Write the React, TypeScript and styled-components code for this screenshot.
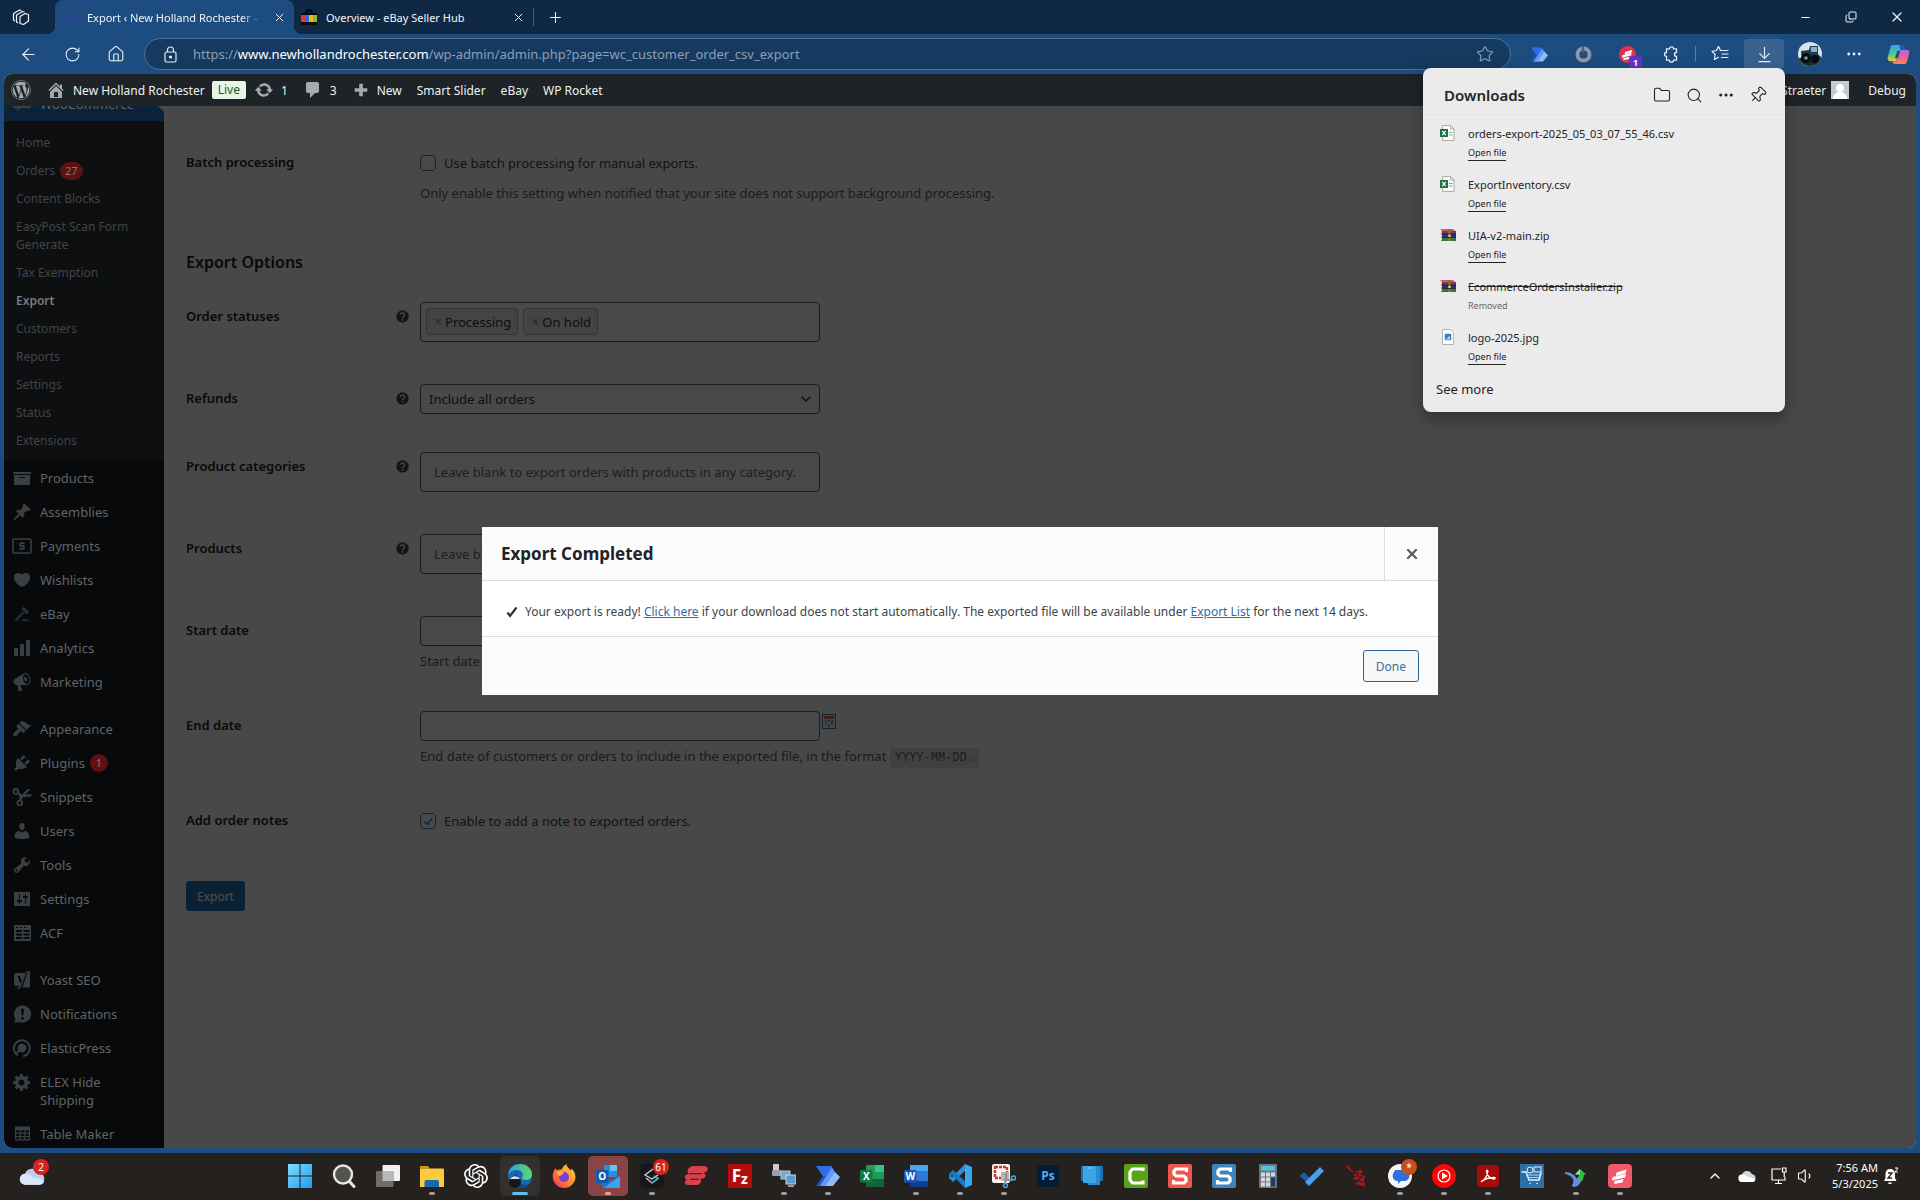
import React from "react";
import styled, { createGlobalStyle, css } from "styled-components";
import { FaWordpress } from "react-icons/fa";
import { SiOpenai } from "react-icons/si";
import {
  Copy, Folder, Minus, Search, Pin, Star, X, Plus, House, RotateCw, ArrowLeft, ArrowDownToLine,
  Ellipsis, ChevronUp, ChevronDown, Volume1,
} from "lucide-react";

const sans = `"Noto Sans", "Open Sans", "Liberation Sans", sans-serif`;
const mono = `"Liberation Mono", "DejaVu Sans Mono", monospace`;

const Global = createGlobalStyle`
  *, *::before, *::after { box-sizing: border-box; }
  body { margin: 0; background: #1c4c80; font-family: ${sans}; font-size: 13px; }
  button, input, select { font-family: inherit; margin: 0; }
  h1, h2, h3, p, ul { margin: 0; padding: 0; }
  svg { display: block; flex: none; }
`;

const plainButton = css`
  border: 0;
  padding: 0;
  background: none;
  color: inherit;
  cursor: pointer;
  display: flex;
  align-items: center;
  justify-content: center;
`;

/* ---------- Browser window ---------- */

const Desktop = styled.div`
  display: flex;
  flex-direction: column;
  height: 100vh;
  overflow: hidden;
`;

const Browser = styled.div`
  position: relative;
  flex: 1;
  min-height: 0;
  display: flex;
  flex-direction: column;
  background: #1c4c80;
`;

const TitleBar = styled.header`
  display: flex;
  height: 34px;
  background: #0f2944;
  color: #f1f5f9;
`;

const Workspaces = styled.button`
  ${plainButton}
  width: 42px;
  margin-right: 13px;
`;

const Tab = styled.div<{ $active?: boolean }>`
  position: relative;
  display: flex;
  align-items: center;
  gap: 9px;
  width: 239px;
  padding: 0 7px;
  font-size: 11px;
  background: ${(p) => (p.$active ? "#1c4c80" : "transparent")};
  border-radius: ${(p) => (p.$active ? "8px 8px 0 0" : "0")};
  &::before, &::after {
    content: "";
    display: ${(p) => (p.$active ? "block" : "none")};
    position: absolute;
    bottom: 0;
    width: 8px;
    height: 8px;
  }
  &::before { left: -8px; background: radial-gradient(circle at 0 0, transparent 8px, #1c4c80 8px); }
  &::after { right: -8px; background: radial-gradient(circle at 100% 0, transparent 8px, #1c4c80 8px); }
`;

const TabTitle = styled.span<{ $fade?: boolean }>`
  flex: 1;
  min-width: 0;
  white-space: nowrap;
  mask-image: ${(p) => (p.$fade ? "linear-gradient(90deg, #000 88%, transparent)" : "none")};
`;

const TabClose = styled.button`
  ${plainButton}
  width: 16px;
  height: 16px;
`;

const NewTab = styled.button`
  ${plainButton}
  width: 44px;
  margin: 8px auto 8px 0;
  border-left: 1px solid #4a5f76;
`;

const WindowButton = styled.button`
  ${plainButton}
  width: 46px;
`;

const Toolbar = styled.div`
  display: flex;
  align-items: center;
  height: 40px;
  padding: 0 0 0 6px;
  color: #e8eff6;
`;

const ToolButton = styled.button<{ $on?: boolean }>`
  ${plainButton}
  position: relative;
  width: ${(p) => (p.$on ? "40px" : "44px")};
  height: 30px;
  margin-left: ${(p) => (p.$on ? "2px" : "0")};
  margin-right: ${(p) => (p.$on ? "4px" : "0")};
  border-radius: 4px;
  background: ${(p) => (p.$on ? "#3a6290" : "none")};
`;

const ToolDivider = styled.span`
  width: 1px;
  height: 16px;
  margin: 0 2px;
  background: #5b7fa6;
`;

const CountBadge = styled.span`
  position: absolute;
  right: 7px;
  bottom: 0;
  width: 13px;
  height: 13px;
  border-radius: 3px;
  background: #6334c4;
  color: #fff;
  font-size: 9px;
  font-weight: 700;
  line-height: 13px;
  text-align: center;
`;

const AddressBar = styled.div`
  display: flex;
  align-items: center;
  gap: 14px;
  flex: 1;
  height: 32px;
  margin: 0 6px;
  padding: 0 16px 0 17px;
  border: 1px solid #4d7196;
  border-radius: 16px;
  background: #16395f;
  color: #dfe8f1;
`;

const Url = styled.span`
  flex: 1;
  white-space: nowrap;
  color: #8c9fb4;
  font-size: 13px;
  b { color: #fff; font-weight: 400; }
`;

const Avatar = styled.span`
  width: 24px;
  height: 24px;
  border-radius: 50%;
  overflow: hidden;
`;

/* ---------- Page ---------- */

const Page = styled.div`
  position: relative;
  flex: 1;
  min-height: 0;
  margin: 0 4px 5px;
  display: flex;
  flex-direction: column;
  overflow: hidden;
  border-radius: 8px;
  background: #f0f0f1;
`;

const AdminBar = styled.nav`
  position: relative;
  z-index: 4;
  display: flex;
  align-items: center;
  flex: none;
  height: 32px;
  padding: 0 10px 0 7px;
  background: #1d2327;
  color: #f0f0f1;
  font-size: 12px;
`;

const BarLink = styled.a<{ $gap?: number }>`
  display: flex;
  align-items: center;
  gap: 7px;
  margin-right: ${(p) => p.$gap ?? 15}px;
  color: inherit;
  text-decoration: none;
  white-space: nowrap;
  svg { color: #a7aaad; }
`;

const Live = styled.span`
  padding: 0 6px;
  margin-right: 8px;
  border-radius: 2px;
  background: #e6f5e6;
  color: #1c5c24;
  line-height: 18px;
`;

const BarUser = styled(BarLink)`
  gap: 5px;
  margin-left: auto;
`;

const Body = styled.div`
  flex: 1;
  min-height: 0;
  display: flex;
  overflow: hidden;
`;

const Sidebar = styled.nav`
  position: relative;
  z-index: 3;
  flex: none;
  width: 160px;
  overflow: hidden;
  background: #07090b;
`;

const Menu = styled.ul`
  list-style: none;
  margin-top: -19px;
`;

const MenuLink = styled.a<{ $current?: boolean }>`
  position: relative;
  display: flex;
  align-items: flex-start;
  gap: 8px;
  padding: 8px;
  background: ${(p) => (p.$current ? "#0b2338" : "transparent")};
  color: #626465;
  font-size: 13px;
  line-height: 18px;
  text-decoration: none;
  svg { margin: -1px 0; color: #3b3f42; }
  &::after {
    content: "";
    display: ${(p) => (p.$current ? "block" : "none")};
    position: absolute;
    right: 0;
    top: 9px;
    border: 8px solid transparent;
    border-right-color: #484848;
  }
`;

const Separator = styled.li`
  height: 13px;
`;

const SubMenu = styled.ul`
  list-style: none;
  padding: 8px 0 6px;
  background: #0d0f11;
`;

const SubLink = styled.a<{ $current?: boolean }>`
  display: block;
  padding: 5px 12px;
  color: ${(p) => (p.$current ? "#7c7d7e" : "#414547")};
  font-size: 12px;
  font-weight: ${(p) => (p.$current ? 600 : 400)};
  line-height: 18px;
  text-decoration: none;
`;

const MenuCount = styled.span`
  display: inline-block;
  min-width: 18px;
  height: 18px;
  margin-left: 5px;
  padding: 0 5px;
  border-radius: 9px;
  background: #5e1113;
  color: #8c7474;
  font-size: 11px;
  line-height: 18px;
  text-align: center;
  vertical-align: top;
`;

const Main = styled.main`
  flex: 1;
  min-width: 0;
  padding: 42px 22px 0;
  overflow: hidden;
  color: #3c434a;
`;

const Section = styled.h2`
  margin: 7px 0 28px;
  color: #1d2327;
  font-size: 16px;
  font-weight: 600;
  line-height: 24px;
`;

const Row = styled.div`
  display: grid;
  grid-template-columns: 210px 24px minmax(0, 1fr);
  align-items: start;
  padding-bottom: 38px;
`;

const RowLabel = styled.label`
  padding-top: 5px;
  color: #1d2327;
  font-size: 13px;
  font-weight: 600;
  line-height: 18px;
`;

const Help = styled.span`
  display: flex;
  padding-top: 8px;
  color: #3c434a;
`;

const fieldBox = css`
  width: 400px;
  max-width: 100%;
  border: 1px solid #5c6066;
  border-radius: 4px;
  background: #f6f6f7;
  color: #2c3338;
  font-size: 13px;
`;

const TextField = styled.input`
  ${fieldBox}
  height: 30px;
  padding: 0 8px;
`;

const PickerField = styled.input`
  ${fieldBox}
  display: block;
  height: 40px;
  margin-bottom: 4px;
  padding: 0 13px;
  &::placeholder { color: #646970; opacity: 1; }
`;

const TagField = styled.div`
  ${fieldBox}
  display: flex;
  gap: 5px;
  height: 40px;
  margin-bottom: 4px;
  padding: 5px;
`;

const Tag = styled.span`
  display: flex;
  align-items: center;
  gap: 3px;
  height: 27px;
  padding: 0 6px 0 7px;
  border: 1px solid #aaa;
  border-radius: 4px;
  background: #e4e4e4;
`;

const TagRemove = styled.button`
  ${plainButton}
  color: #888;
  font-size: 14px;
`;

const SelectWrap = styled.div`
  position: relative;
  width: 400px;
  max-width: 100%;
  svg { position: absolute; right: 6px; top: 7px; color: #3c434a; pointer-events: none; }
`;

const Select = styled.select`
  ${fieldBox}
  display: block;
  height: 30px;
  padding: 0 24px 0 8px;
  appearance: none;
`;

const CheckLine = styled.label`
  display: flex;
  align-items: center;
  gap: 8px;
  height: 30px;
  font-size: 13px;
`;

const Check = styled.input`
  appearance: none;
  display: grid;
  place-items: center;
  width: 16px;
  height: 16px;
  border: 1px solid #6c7076;
  border-radius: 4px;
  background: #f6f6f7;
  &:checked::before {
    content: "";
    width: 5px;
    height: 9px;
    margin-top: -2px;
    border: solid #3c9cf0;
    border-width: 0 2px 2px 0;
    transform: rotate(40deg);
  }
`;

const DateLine = styled.div`
  display: flex;
  gap: 2px;
  padding-right: 8px;
  svg { margin-top: 3px; }
`;

const Description = styled.p`
  margin-top: 4px;
  color: #5c6066;
  font-size: 13px;
  line-height: 23px;
  white-space: nowrap;
  code {
    padding: 3px 5px;
    background: #d8d8da;
    font-family: ${mono};
    font-size: 12px;
    line-height: 16px;
  }
`;

const Primary = styled.button`
  ${plainButton}
  height: 30px;
  margin-top: 7px;
  padding: 0 11px;
  border-radius: 3px;
  background: #2271b1;
  color: #fff;
  font-size: 12px;
`;

/* ---------- Modal ---------- */

const Backdrop = styled.div`
  position: absolute;
  inset: 0;
  z-index: 5;
  display: grid;
  place-items: center;
  pointer-events: none;
`;

const Dim = styled.div`
  position: absolute;
  inset: 32px 0 0 160px;
  z-index: 2;
  background: rgba(0, 0, 0, 0.7);
`;

const Modal = styled.section`
  width: 50%;
  background: #fcfcfc;
  pointer-events: auto;
`;

const ModalHeader = styled.header`
  display: flex;
  height: 54px;
  border-bottom: 1px solid #ddd;
`;

const ModalTitle = styled.h1`
  flex: 1;
  padding-left: 19px;
  color: #1d2327;
  font-size: 17px;
  font-weight: 700;
  line-height: 53px;
`;

const ModalClose = styled.button`
  ${plainButton}
  width: 54px;
  border-left: 1px solid #ddd;
  color: #5c5f62;
`;

const ModalBody = styled.div`
  display: flex;
  align-items: center;
  gap: 7px;
  min-height: 55px;
  padding: 6px 24px 0;
  background: #fff;
  color: #3c434a;
  font-size: 12px;
  line-height: 18px;
  a { color: #2e6da4; }
`;

const ModalFooter = styled.footer`
  display: flex;
  justify-content: flex-end;
  padding: 13px 19px;
  border-top: 1px solid #ddd;
`;

const Secondary = styled.button`
  ${plainButton}
  height: 32px;
  padding: 0 12px;
  border: 1px solid #2e6296;
  border-radius: 3px;
  background: #f6f7f7;
  color: #3c6d9e;
  font-size: 12px;
`;

/* ---------- Downloads flyout ---------- */

const Flyout = styled.aside`
  position: absolute;
  z-index: 10;
  top: 68px;
  right: 135px;
  width: 362px;
  padding-bottom: 13px;
  border-radius: 8px;
  background: #ebebeb;
  color: #242424;
  box-shadow: 0 6px 16px rgba(0, 0, 0, 0.35);
`;

const FlyoutHeader = styled.header`
  display: flex;
  align-items: center;
  height: 47px;
  padding: 8px 11px 0 21px;
  border-bottom: 1px solid #e2e2e2;
`;

const FlyoutTitle = styled.h3`
  flex: 1;
  font-size: 15px;
  font-weight: 600;
`;

const FlyoutButton = styled.button`
  ${plainButton}
  width: 32px;
  height: 32px;
`;

const FileList = styled.ul`
  list-style: none;
  padding-top: 9px;
`;

const FileRow = styled.li`
  display: flex;
  gap: 12px;
  height: 51px;
  padding-left: 17px;
  svg { margin-top: 1px; }
`;

const FileName = styled.div<{ $gone?: boolean }>`
  font-size: 11px;
  line-height: 20px;
  text-decoration: ${(p) => (p.$gone ? "line-through" : "none")};
`;

const OpenFile = styled.a`
  display: block;
  width: fit-content;
  border-bottom: 1px solid #242424;
  color: #242424;
  font-size: 9px;
  line-height: 14px;
  margin-top: 2px;
  text-decoration: none;
`;

const Removed = styled.div`
  margin-top: 2px;
  color: #6a6a6a;
  font-size: 9px;
  line-height: 14px;
`;

const SeeMore = styled.button`
  ${plainButton}
  height: 20px;
  margin: 0 0 0 13px;
  font-size: 13px;
`;

/* ---------- Taskbar ---------- */

const Taskbar = styled.footer`
  display: grid;
  grid-template-columns: 1fr auto 1fr;
  height: 47px;
  padding-bottom: 1px;
  background: #24211e;
  color: #fff;
`;

const TaskGroup = styled.div<{ $end?: boolean }>`
  display: flex;
  align-items: center;
  justify-content: ${(p) => (p.$end ? "flex-end" : "flex-start")};
  padding: ${(p) => (p.$end ? "0 16px 0 0" : "0 10px")};
`;

const TaskButton = styled.button<{ $tile?: string }>`
  ${plainButton}
  position: relative;
  width: 40px;
  height: 40px;
  margin: 3px 2px;
  border-radius: 5px;
  background: ${(p) => p.$tile ?? "none"};
`;

const Running = styled.span<{ $color?: string }>`
  position: absolute;
  bottom: 1px;
  left: 50%;
  width: ${(p) => (p.$color === "#5cc0ee" ? 16 : 6)}px;
  height: 3px;
  border-radius: 2px;
  background: ${(p) => p.$color ?? "#9d9b99"};
  transform: translateX(-50%);
`;

const TaskBadge = styled.span<{ $color?: string }>`
  position: absolute;
  top: 3px;
  right: 3px;
  min-width: 16px;
  height: 16px;
  border-radius: 8px;
  background: ${(p) => p.$color ?? "#d8231f"};
  font-size: 10px;
  line-height: 16px;
  text-align: center;
`;

const TrayButton = styled.button<{ $w: number }>`
  ${plainButton}
  width: ${(p) => p.$w}px;
  height: 40px;
`;

const Clock = styled.time`
  width: 61px;
  font-size: 11px;
  line-height: 16px;
  text-align: right;
  white-space: nowrap;
`;

/* ---------- Drawings ---------- */

const dash: Record<string, React.ReactNode> = {
  woo: <path d="M1 4h18v10H9l-4 3v-3H1z" />,
  home: <path d="M16 8.5l1.53 1.53-1.06 1.06L10 4.6l-6.47 6.49-1.06-1.06L10 2.5l4 4v-2h2v4zm-6-2.46l6 5.99V18H4v-5.97zM12 17v-5H8v5h4z" />,
  comment: <path d="M5 2h9c1.1 0 2 .9 2 2v7c0 1.1-.9 2-2 2h-2l-5 5v-5H5c-1.1 0-2-.9-2-2V4c0-1.1.9-2 2-2z" />,
  update: <path d="M10.2 3.28c3.53 0 6.43 2.61 6.92 6h2.08l-3.5 4-3.5-4h2.32c-.45-1.97-2.21-3.45-4.32-3.45-1.45 0-2.73.71-3.54 1.78L4.95 5.66C6.23 4.2 8.11 3.28 10.2 3.28zm-.4 13.44c-3.52 0-6.43-2.61-6.92-6H.8l3.5-4c1.17 1.33 2.33 2.67 3.5 4H5.48c.45 1.97 2.21 3.45 4.32 3.45 1.45 0 2.73-.71 3.54-1.78l1.71 1.95c-1.28 1.46-3.15 2.38-5.25 2.38z" />,
  plus: <path d="M8 3h4v5h5v4h-5v5H8v-5H3V8h5z" />,
  archive: <path d="M19 4v2H1V4h18zM2 7h16v10H2V7zm11 3V9H7v1h6z" />,
  pin: <path d="M10.44 3.02l1.82-1.82 6.36 6.35-1.83 1.82c-1.05-.68-2.48-.57-3.41.36l-.75.75c-.92.93-1.04 2.35-.35 3.41l-1.83 1.82-2.41-2.41-2.8 2.79c-.42.42-3.38 2.71-3.8 2.29s1.86-3.39 2.28-3.81l2.79-2.79L4.1 9.36l1.83-1.82c1.05.69 2.48.57 3.4-.36l.75-.75c.93-.92 1.05-2.35.36-3.41z" />,
  payments: (
    <>
      <rect x="1" y="3" width="18" height="14" rx="1" fill="none" stroke="currentColor" strokeWidth="1.6" />
      <path d="M12.8 8.2V6.6h-2V5.8H9.4v.8H8.8c-.9 0-1.6.7-1.6 1.6v1.2c0 .9.7 1.5 1.6 1.5h2.4v1H7.2v1.6h2.2v.8h1.4v-.8h.5c.9 0 1.6-.7 1.6-1.6v-1.2c0-.9-.7-1.5-1.6-1.5H8.9v-1z" />
    </>
  ),
  heart: <path d="M10 17.12c3.33-1.4 5.74-3.79 7.04-6.21 1.28-2.41 1.46-4.81.32-6.25-1.03-1.29-2.37-1.78-3.73-1.74s-2.68.63-3.63 1.46c-.95-.83-2.27-1.42-3.63-1.46s-2.7.45-3.73 1.74c-1.14 1.44-.96 3.84.34 6.25 1.28 2.42 3.69 4.81 7.02 6.21z" />,
  gavel: <g opacity=".7"><path d="M9.2 4.8l2.6-2.4 5.4 5.6-2.6 2.4zM10.6 7.6l1.6 1.6-8 8.2-1.6-1.4zM10 15.2h6.5v2H10z" /></g>,
  chart: <path d="M2 10h4v8H2zM8 6h4v12H8zM14 2h4v16h-4z" />,
  megaphone: <path d="M18.15 5.94c.46 1.62.38 3.22-.02 4.48-.42 1.28-1.26 2.18-2.3 2.48-.16.06-.26.06-.4.06-.06.02-.12.02-.18.02-.06.02-.14.02-.22.02h-6.8l2.22 5.5c.02.14-.06.26-.14.34-.08.1-.24.16-.34.16H6.95c-.1 0-.26-.06-.34-.16-.08-.08-.16-.2-.14-.34l-1-5.5H4.25l-.02-.02c-.5.06-1.08-.18-1.54-.62s-.88-1.08-1.06-1.88c-.24-.8-.2-1.56-.02-2.2.18-.62.58-1.08 1.06-1.3l.02-.02 9-5.4c.1-.06.18-.1.24-.16.06-.04.14-.08.24-.12.16-.08.28-.12.5-.18 1.04-.3 2.24.1 3.22.98s1.84 2.24 2.26 3.86zm-2.58 5.98h-.02c.4-.1.74-.34 1.04-.7.58-.7.86-1.76.86-3.04 0-.64-.1-1.3-.28-1.98-.34-1.36-1.02-2.5-1.78-3.24s-1.68-1.1-2.46-.88c-.82.22-1.4.96-1.7 2-.32 1.04-.28 2.36.06 3.72.38 1.36 1 2.5 1.8 3.24.78.74 1.62 1.1 2.48.88zm-2.54-7.08c.22-.04.42-.02.62.04.38.16.76.48 1.02 1s.42 1.2.42 1.78c0 .3-.04.56-.12.8-.18.48-.44.84-.86.94-.34.1-.8-.06-1.14-.4s-.64-.86-.78-1.5c-.18-.62-.12-1.24.02-1.72s.48-.84.82-.94z" />,
  brush: <path d="M14.48 11.06L7.41 3.99l1.5-1.5c.5-.56 2.3-.47 3.51.32 1.21.8 1.43 1.28 2.91 2.1 1.18.64 2.45 1.26 4.45.85zm-.71.71L6.7 4.7 4.93 6.47c-.39.39-.39 1.02 0 1.41l1.06 1.06c.39.39.39 1.03 0 1.42-.6.6-1.43 1.11-2.21 1.69-.35.26-.7.53-1.01.84C1.43 14.23.4 16.08 1.4 17.07c.99 1 2.84-.03 4.18-1.36.31-.31.58-.66.85-1.02.57-.78 1.08-1.61 1.69-2.21.39-.39 1.02-.39 1.41 0l1.06 1.06c.39.39 1.02.39 1.41 0z" />,
  plug: <path d="M13.11 4.36L9.87 7.6 8 5.73l3.24-3.24c.35-.34 1.05-.2 1.56.32.52.51.66 1.21.31 1.55zm-8 1.77l.91-1.12 9.01 9.01-1.19.84c-.71.71-2.63 1.16-3.82 1.16H6.14L4.9 17.26c-.59.59-1.54.59-2.12 0-.59-.58-.59-1.53 0-2.12l1.24-1.24v-3.88c0-1.13.4-3.19 1.09-3.89zm7.26 3.97l3.24-3.24c.34-.35 1.04-.21 1.55.31.52.51.66 1.21.31 1.55l-3.24 3.25z" />,
  scissors: (
    <>
      <circle cx="3.8" cy="4.4" r="2.4" fill="none" stroke="currentColor" strokeWidth="1.8" />
      <circle cx="7.8" cy="16" r="2.4" fill="none" stroke="currentColor" strokeWidth="1.8" />
      <path d="M5.4 6.6L7 5.6l3 2.2 5-5.2c1.4-1 2.6-.8 3.4-.2L11 9.8 9.4 14 7.2 13.4l.6-3.6z" />
      <path d="M11.5 7.6l8.5-.4c-.6 1.8-1.6 2.6-3 2.6l-6 .2z" />
    </>
  ),
  user: <path d="M10 9.25c-2.27 0-2.73-3.44-2.73-3.44C7 4.02 7.82 2 9.97 2c2.16 0 2.98 2.02 2.71 3.81 0 0-.41 3.44-2.68 3.44zm0 2.57L12.72 10c2.39 0 4.52 2.33 4.52 4.53v2.49s-3.65 1.13-7.24 1.13c-3.65 0-7.24-1.13-7.24-1.13v-2.49c0-2.25 1.94-4.48 4.47-4.48z" />,
  wrench: <path d="M16.68 9.77c-1.34 1.34-3.3 1.67-4.95.99l-5.41 6.52c-.99.99-2.59.99-3.58 0s-.99-2.59 0-3.57l6.52-5.42c-.68-1.65-.35-3.61.99-4.95 1.28-1.28 3.12-1.62 4.72-1.06l-2.89 2.89 2.82 2.82 2.86-2.87c.53 1.58.18 3.39-1.08 4.65zM3.81 16.21c.4.39 1.04.39 1.43 0 .4-.4.4-1.04 0-1.43-.39-.4-1.03-.4-1.43 0-.39.39-.39 1.03 0 1.43z" />,
  settings: <path d="M18 16V4c0-.55-.45-1-1-1H3c-.55 0-1 .45-1 1v12c0 .55.45 1 1 1h14c.55 0 1-.45 1-1zM8 11h1c.55 0 1 .45 1 1s-.45 1-1 1H8v1.5c0 .28-.22.5-.5.5s-.5-.22-.5-.5V13H6c-.55 0-1-.45-1-1s.45-1 1-1h1V5.5c0-.28.22-.5.5-.5s.5.22.5.5V11zm5-2h-1c-.55 0-1-.45-1-1s.45-1 1-1h1V5.5c0-.28.22-.5.5-.5s.5.22.5.5V7h1c.55 0 1 .45 1 1s-.45 1-1 1h-1v5.5c0 .28-.22.5-.5.5s-.5-.22-.5-.5V9z" />,
  acf: <path fillRule="evenodd" d="M2 2h17v16H2zM4 7v2h6V7zM11.5 7v2h6V7zM4 10.5v2h6v-2zM11.5 10.5v2h6v-2zM4 14v2h6v-2zM11.5 14v2h6v-2zM4 4v1h2V4zM8 4v1h2V4zM12 4v1h2V4z" />,
  yoast: <path fillRule="evenodd" d="M4.5 3H13l-3 8.5L7.8 6H5.6l3.3 8.6c-.4 1-.9 1.4-2 1.5H4.5A2.5 2.5 0 0 1 2 14V5.5A2.5 2.5 0 0 1 4.5 3zM15.8 1H18v16.5h-7.5zM14 1h1L9.4 16c-.6 1.7-1.6 3-3.9 3v-1.4c1.3 0 2-.8 2.5-2L14 1z" />,
  notice: <path fillRule="evenodd" d="M10.5 1.5a8.5 8.5 0 1 1-2 16.7L2 18.5l1.5-3.7a8.5 8.5 0 0 1 7-13.3zM9 4.8l.6 6.7h1.8l.6-6.7zM10.5 13a1.4 1.4 0 1 0 0 2.8 1.4 1.4 0 0 0 0-2.8z" />,
  elastic: (
    <>
      <path d="M6 17.3a8 8 0 1 1 5 .9" fill="none" stroke="currentColor" strokeWidth="1.8" />
      <path d="M10 5.5a4.5 4.5 0 1 1-2.5 8.3L4 17l-1-1 3-4a4.5 4.5 0 0 1 4-6.5z" />
    </>
  ),
  gear: <path d="M18 12h-2.18c-.17.7-.44 1.35-.81 1.93l1.54 1.54-2.1 2.1-1.54-1.54c-.58.36-1.23.63-1.91.79V19H8v-2.18c-.68-.16-1.33-.43-1.91-.79l-1.54 1.54-2.12-2.12 1.54-1.54c-.36-.58-.63-1.23-.79-1.91H1V9.03h2.17c.16-.7.44-1.35.8-1.94L2.43 5.55l2.1-2.1 1.54 1.54c.58-.37 1.24-.64 1.93-.81V2h3v2.18c.68.16 1.33.43 1.91.79l1.54-1.54 2.12 2.12-1.54 1.54c.36.59.64 1.24.8 1.94H18V12zm-8.5 1.5c1.66 0 3-1.34 3-3s-1.34-3-3-3-3 1.34-3 3 1.34 3 3 3z" />,
  table: <path fillRule="evenodd" d="M3 2.5h15v14H3zM4.2 6.2v2.3h3.3V6.2zM8.7 6.2v2.3h3.6V6.2zM13.5 6.2v2.3h3.3V6.2zM4.2 9.7V12h3.3V9.7zM8.7 9.7V12h3.6V9.7zM13.5 9.7V12h3.3V9.7zM4.2 13.2v2.1h3.3v-2.1zM8.7 13.2v2.1h3.6v-2.1zM13.5 13.2v2.1h3.3v-2.1z" />,
};

const Dash = ({ name, size = 20 }: { name: string; size?: number }) => (
  <svg width={size} height={size} viewBox="0 0 20 20" fill="currentColor" aria-hidden="true">{dash[name]}</svg>
);

const Art = ({ size = 24, box = 24, children }: { size?: number; box?: number; children: React.ReactNode }) => (
  <svg width={size} height={size} viewBox={`0 0 ${box} ${box}`} aria-hidden="true">{children}</svg>
);

const AppLetter = ({ x = 12, y = 17, size = 14, fill = "#fff", children }: { x?: number; y?: number; size?: number; fill?: string; children: string }) => (
  <text x={x} y={y} fontSize={size} fill={fill} fontWeight="700" textAnchor="middle" fontFamily="Open Sans, sans-serif">{children}</text>
);

const PowerAutomate = ({ size = 24 }: { size?: number }) => (
  <Art size={size}>
    <path d="M0 2h15l3 3.5L5 22H0l7-10z" fill="#1f55d0" />
    <path d="M0 2h15l3 4-8 6H7z" fill="#2f6de8" />
    <path d="M15.5 4.5L24 13l-7 9H4z" fill="#8fbcf8" />
    <path d="M15.5 4.5L19 8 9 22H4z" fill="#5f98f2" />
  </Art>
);

const Stripes = ({ size = 24, round }: { size?: number; round?: boolean }) => (
  <Art size={size}>
    <rect width="24" height="24" rx={round ? 12 : 4} fill={round ? "#dc3350" : "#f0596b"} />
    <path d="M8.5 8.5L18.500 5.500l-1 4-9.500 2.500zM4.500 13L18 10l-1 3.500L4 16.500zM6.500 17l9-2-1 3.500-8.500 1.500z" fill="#fff" />
  </Art>
);

const HelpIcon = () => (
  <svg width="13" height="13" viewBox="0 0 20 20" aria-hidden="true">
    <circle cx="10" cy="10" r="9.5" fill="currentColor" />
    <path d="M6.8 7.5a3.2 3 0 1 1 4.8 2.6c-1 .6-1.5 1-1.5 2.2" fill="none" stroke="#e8e8e8" strokeWidth="2.2" />
    <circle cx="10" cy="15" r="1.4" fill="#e8e8e8" />
  </svg>
);

const CsvIcon = () => (
  <Art size={16} box={16}>
    <path d="M2.5.5h8l3.5 3.5v11.5H2.5z" fill="#fafafa" stroke="#9a9a9a" strokeWidth=".8" />
    <path d="M10.5.5v3.5H14" fill="none" stroke="#9a9a9a" strokeWidth=".8" />
    <path d="M9 7.5h3.5M9 10h3.5" stroke="#6fb58a" strokeWidth="1" />
    <rect x="0" y="4" width="8" height="8" fill="#1f7244" />
    <path d="M2.3 5.8l3.4 4.4M5.7 5.8L2.3 10.2" stroke="#fff" strokeWidth="1.2" />
  </Art>
);

const ZipIcon = () => (
  <Art size={16} box={16}>
    <path d="M0 2h13l3 2.5H2z" fill="#c0607a" />
    <rect x="1" y="4" width="15" height="3" fill="#8a3350" />
    <rect x="1" y="7" width="15" height="3.5" fill="#27347a" />
    <rect x="1" y="10.5" width="15" height="3.5" fill="#2f7a3a" />
    <path d="M0 2l2 2.5v2L0 5zM0 6l2 1.5v2.5L0 9zM0 9.5l2 1.5v2.5L0 12z" fill="#e9e4d8" />
    <rect x="8" y="2" width="3" height="12" fill="#8a6a3e" />
    <rect x="8.5" y="7" width="2" height="3" fill="#e0cc90" />
    <path d="M2 7h14M2 10.5h14" stroke="#15192e" strokeWidth=".8" />
  </Art>
);

const JpgIcon = () => (
  <Art size={16} box={16}>
    <path d="M2.5.5h8l3 3v12h-11z" fill="#fdfdfd" stroke="#a5a5a5" strokeWidth=".8" />
    <rect x="4.8" y="4.8" width="6.5" height="6.5" rx="1" fill="#2f7fd0" />
    <path d="M5.5 10.5l4.5-4v4z" fill="#a8d4f7" />
  </Art>
);

const Copilot = () => (
  <Art size={23}>
    <defs>
      <linearGradient id="cpa" x1="0" y1="0" x2="0" y2="1"><stop offset="0" stopColor="#2aa9e8" /><stop offset=".6" stopColor="#5bc48a" /><stop offset="1" stopColor="#f2c53a" /></linearGradient>
      <linearGradient id="cpb" x1="0" y1="0" x2="0" y2="1"><stop offset="0" stopColor="#a56bea" /><stop offset=".5" stopColor="#ee5f9a" /><stop offset="1" stopColor="#f58a4b" /></linearGradient>
    </defs>
    <path d="M6 2h9c2 0 2.5 1.5 3 3l-4 1-3 10c-.6 2-1.5 3-3.5 3H4c-3 0-4-2-3-5L3.5 5C4 3 4.5 2 6 2z" fill="url(#cpa)" />
    <path d="M13.5 7h6c3 0 4.5 1.5 3.5 4.5L21 19c-.6 2-1.5 3-3.5 3H9c-2 0-3-1-3.5-3h3c1.5 0 2-1 2.5-2.5z" fill="url(#cpb)" />
    <path d="M13 2h2.5c2 0 2.7 1.5 3.2 5h-5z" fill="#1560b8" />
    <path d="M10.8 8h3l-2.6 8h-3z" fill="#1c4c80" />
  </Art>
);

const TractorPhoto = () => (
  <Art>
    <rect width="24" height="24" fill="#d5e3e6" />
    <rect y="16" width="24" height="8" fill="#1d2a20" />
    <path d="M3 9l8-1 1-4h8v8l3 3v4H4z" fill="#1c3a52" />
    <path d="M13 5h6v5h-6z" fill="#8db4c4" />
    <circle cx="8" cy="16" r="5" fill="#0a0d10" /><circle cx="17" cy="17" r="4" fill="#0a0d10" />
    <circle cx="8" cy="16" r="1.8" fill="#8a979c" />
  </Art>
);

const Cloud = ({ gray }: { gray?: boolean }) => (
  <Art size={gray ? 18 : 26}>
    <path d="M6 20a5 5 0 0 1-.5-10A7 7 0 0 1 18.5 9.5 5.3 5.3 0 0 1 19 20z" fill={gray ? "#d9d9d9" : "#b8cff2"} />
    <path d="M6 20a5 5 0 0 1-.5-10c5 0 6 2 8 3.5 3 0 8 1 9.5 4-.8 1.5-2 2.5-4 2.5z" fill={gray ? "#fff" : "#dbe7fa"} />
  </Art>
);

/* ---------- Data ---------- */

const subItems: { label: string; count?: number; current?: boolean }[] = [
  { label: "Home" }, { label: "Orders", count: 27 }, { label: "Content Blocks" }, { label: "EasyPost Scan Form Generate" },
  { label: "Tax Exemption" }, { label: "Export", current: true }, { label: "Customers" }, { label: "Reports" },
  { label: "Settings" }, { label: "Status" }, { label: "Extensions" },
];

type MenuEntry = { label: string; icon: string; count?: number };
const menuGroups: MenuEntry[][] = [
  [
    { label: "Products", icon: "archive" }, { label: "Assemblies", icon: "pin" }, { label: "Payments", icon: "payments" },
    { label: "Wishlists", icon: "heart" }, { label: "eBay", icon: "gavel" }, { label: "Analytics", icon: "chart" },
    { label: "Marketing", icon: "megaphone" },
  ],
  [
    { label: "Appearance", icon: "brush" }, { label: "Plugins", icon: "plug", count: 1 }, { label: "Snippets", icon: "scissors" },
    { label: "Users", icon: "user" }, { label: "Tools", icon: "wrench" }, { label: "Settings", icon: "settings" }, { label: "ACF", icon: "acf" },
  ],
  [
    { label: "Yoast SEO", icon: "yoast" }, { label: "Notifications", icon: "notice" }, { label: "ElasticPress", icon: "elastic" },
    { label: "ELEX Hide Shipping", icon: "gear" }, { label: "Table Maker", icon: "table" },
  ],
];

const files = [
  { name: "orders-export-2025_05_03_07_55_46.csv", icon: <CsvIcon /> },
  { name: "ExportInventory.csv", icon: <CsvIcon /> },
  { name: "UIA-v2-main.zip", icon: <ZipIcon /> },
  { name: "EcommerceOrdersInstaller.zip", icon: <ZipIcon />, gone: true },
  { name: "logo-2025.jpg", icon: <JpgIcon /> },
];

type TaskApp = { name: string; art: React.ReactNode; running?: string | boolean; tile?: string; badge?: string; badgeColor?: string };

const tasks: TaskApp[] = [
  { name: "Start", art: <Art><defs><linearGradient id="win" x1="0" y1="0" x2="1" y2="1"><stop offset="0" stopColor="#7fdcff" /><stop offset="1" stopColor="#1f9cf0" /></linearGradient></defs><path d="M0 0h11.5v11.5H0zM12.5 0H24v11.5H12.5zM0 12.5h11.5V24H0zM12.5 12.5H24V24H12.5z" fill="url(#win)" /></Art> },
  { name: "Search", art: <Art><circle cx="11" cy="10.5" r="9" fill="#55534f" stroke="#e8e6e4" strokeWidth="2.4" /><path d="M17.5 17.5l4.5 5" stroke="#e8e6e4" strokeWidth="3" strokeLinecap="round" /></Art> },
  { name: "Task view", art: <Art><rect x="6.5" y="1" width="17.5" height="16" rx="1" fill="#f2f2f2" /><rect x="0" y="7" width="17.5" height="16" rx="1" fill="#6f6e6d" /><path d="M6.5 7h11v10h-11z" fill="#b9b9b9" /></Art> },
  { name: "File Explorer", running: true, art: <Art><path d="M0 2h8l2 2.5H0z" fill="#d9950f" /><path d="M0 4.5h23a1 1 0 0 1 1 1V22a1 1 0 0 1-1 1H0z" fill="#fbcb3c" /><path d="M4.5 23v-5a2 2 0 0 1 2-2h10.5a2 2 0 0 1 2 2v5z" fill="#1568b4" /></Art> },
  { name: "ChatGPT", art: <SiOpenai size={24} /> },
  {
    name: "Microsoft Edge", running: "#5cc0ee", tile: "#33312f",
    art: <Art><defs><linearGradient id="edg" x1="0" y1="0" x2="1" y2="0"><stop offset="0" stopColor="#2a9fe0" /><stop offset="1" stopColor="#5fd86a" /></linearGradient></defs><circle cx="12" cy="12" r="12" fill="#1468b8" /><path d="M0 11C1 3 7 0 12 0c7 0 12 5 12 10 0 4-3 6-6 6-4 0-5-2-3.5-3.5C16 9 13 6 9 6c-4.5 0-7.5 2.5-9 5z" fill="url(#edg)" /><path d="M9 9c-2 5 2 12 9 12 2 0 4-1 5-2-2 3-6 5-10 5-6 0-9-6-8-10 .5-2.500 2-4.500 4-5z" fill="#0f4a8a" /><circle cx="7" cy="18" r="6" fill="#12181c" /><path d="M2 15a6 6 0 0 1 10 0z" fill="#d5e3e6" /></Art>,
  },
  {
    name: "Firefox",
    art: <Art><defs><linearGradient id="ffx" x1="1" y1="0" x2="0" y2="1"><stop offset="0" stopColor="#ffe04a" /><stop offset=".5" stopColor="#ff8a2a" /><stop offset="1" stopColor="#f0286a" /></linearGradient></defs><path d="M12 24A11.5 11.5 0 0 1 .8 11c.2-3 1.5-5 2.7-7 .2 1.3.8 2 1.3 2.6C6.5 5.5 8 5.4 9.5 5.8 11 2 13 1.2 14.5 0c.2 3.5 3 4.5 4.5 6.8l.5-2.3c2.5 2.5 4 5.5 4 8.5A11.5 11.5 0 0 1 12 24z" fill="url(#ffx)" /><circle cx="12" cy="13" r="5" fill="#7a3fd0" /><path d="M5 8c3-1 6 0 7 1.5-1 1-3 .8-3.5 2.5C6.5 12 5 10 5 8z" fill="#ffb13a" /></Art>,
  },
  { name: "Outlook", running: "#f09a9a", tile: "#8a4448", art: <Art><path d="M8 1h13v12H8z" fill="#2b8fdc" /><path d="M14 1h7v6h-7z" fill="#5fc3f5" /><path d="M6 12l9 5 9-5v12H6z" fill="#1c78cc" /><path d="M24 12L8 24h16z" fill="#3ba5ec" /><rect x="0" y="6" width="12.5" height="13" rx="1" fill="#0f5cb0" /><AppLetter x={6.3} y={16} size={10}>O</AppLetter></Art> },
  { name: "Sync client", running: true, badge: "61", art: <Art><rect width="24" height="24" rx="5" fill="#15171a" /><path d="M13 5l-8 6 7 4 6-4M6 14l6 5 6-4.5-4-2.5" fill="none" stroke="#c9d2d6" strokeWidth="1.3" /><path d="M12 19l6-4.5-4-2.5" fill="none" stroke="#42b7b0" strokeWidth="1.3" /></Art> },
  { name: "Expressway", art: <Art><path d="M9 2h11c4 0 5 4 2 6l-3 1.5c4 0 3 4.5 0 5l-3 .5c2 0 1 6-3 6H4c-4 0-4-4-1-5.5-3 0-3-4.5 0-5h2C2 9 4 2 9 2z" fill="#d8404c" /><path d="M5 9.8h13M6 15.3h9" stroke="#24211e" strokeWidth="1.1" /></Art> },
  { name: "FileZilla", art: <Art><rect width="24" height="24" rx="1" fill="#b00d0d" /><AppLetter x={8.5} y={18} size={17}>F</AppLetter><AppLetter x={16.5} y={20} size={14}>z</AppLetter></Art> },
  { name: "Remote Desktop", running: true, art: <Art><rect x="1" y="0" width="6" height="11" rx="1" fill="#c9ccd0" /><rect x="0" y="6" width="9" height="6" rx="1" fill="#9aa0a6" /><rect x="9" y="7" width="9" height="8" fill="#6fa9d6" stroke="#b9c9d6" /><rect x="14" y="11" width="10" height="9" fill="#5b9bd0" stroke="#c9d6e0" /><rect x="16" y="21" width="6" height="2" fill="#9aa0a6" /></Art> },
  { name: "Power Automate", running: true, art: <PowerAutomate /> },
  { name: "Excel", art: <Art><rect x="6" y="1" width="18" height="22" rx="1" fill="#1f9a5b" /><path d="M15 1h9v7h-9z" fill="#35c481" /><path d="M6 15h18v7a1 1 0 0 1-1 1H6z" fill="#14633a" /><rect y="6" width="12.5" height="12.5" rx="1" fill="#107a41" /><AppLetter x={6.3} y={16} size={10}>X</AppLetter></Art> },
  { name: "Word", running: true, art: <Art><rect x="6" y="1" width="18" height="22" rx="1" fill="#2b7bd6" /><path d="M6 1h18v6H6z" fill="#4aa6ee" /><path d="M6 17h18v6H6z" fill="#123f8c" /><rect y="6" width="12.5" height="12.5" rx="1" fill="#1a55b8" /><AppLetter x={6.3} y={16} size={10}>W</AppLetter></Art> },
  { name: "Visual Studio Code", running: true, art: <Art><path d="M17 0L4 13l-3-2.5V14l4 4L19 5z" fill="#2a8fd8" /><path d="M17 24L4 11l-3 2.5V10l4-4 14 13z" fill="#1b78c0" /><path d="M17 0l7 3v18l-7 3z" fill="#38a9ee" /></Art> },
  { name: "Snipping Tool", running: true, art: <Art><rect width="18" height="19" rx="2" fill="#f6f3f0" /><rect x="3" y="3" width="12" height="11" fill="none" stroke="#c93a2a" strokeWidth="2.4" strokeDasharray="3 1" /><rect x="9" y="8" width="8" height="9" fill="#b9b4ae" /><path d="M14 9v7l-1 3M12 16h8" stroke="#8d9297" strokeWidth="2" /><circle cx="21.5" cy="14" r="2" fill="none" stroke="#47a7e6" strokeWidth="1.5" /><circle cx="13.5" cy="21.5" r="2" fill="none" stroke="#47a7e6" strokeWidth="1.5" /></Art> },
  { name: "Photoshop", art: <Art><rect x="1" y="1" width="22" height="22" rx="4" fill="#001d33" /><AppLetter y={16} size={12} fill="#4fb1fb">Ps</AppLetter></Art> },
  { name: "Phone Link", art: <Art><rect x="1" y="2" width="22" height="15" rx="1" fill="#1c6fb5" /><path d="M5 2h15v18a1 1 0 0 1-1 1H8z" fill="#2a8cd0" /><rect x="3" y="2" width="13" height="17" rx="1" fill="#39a6e6" /><path d="M8 4h4" stroke="#8ed3fa" /></Art> },
  { name: "Camtasia", art: <Art><rect width="24" height="24" rx="2" fill="#5aa314" /><path d="M19 7V5H8.5L6 8v8l2.5 3H19v-2.5" fill="none" stroke="#fff" strokeWidth="3.2" /></Art> },
  { name: "Snagit", art: <Art><rect width="24" height="24" rx="2" fill="#f0564e" /><path d="M18.5 8V5H8L6 7v3l2 2h8l2 2v3l-2 2H5.5v-3" fill="none" stroke="#fff" strokeWidth="3.2" /></Art> },
  { name: "Snagit Editor", art: <Art><rect width="24" height="24" rx="2" fill="#3f83bf" /><path d="M18.5 8V5H8L6 7v3l2 2h8l2 2v3l-2 2H5.5v-3" fill="none" stroke="#fff" strokeWidth="3.2" /></Art> },
  { name: "Calculator", art: <Art><rect x="3" y="0" width="18" height="24" rx="1" fill="#6d7680" /><rect x="5" y="2" width="14" height="4.5" fill="#59c1dd" /><path d="M5 8.5h4v4H5zM10 8.5h4v4h-4zM15 8.5h4v4h-4zM5 13.5h4v4H5zM10 13.5h4v4h-4zM5 18.5h4v4H5zM10 18.5h4v4h-4z" fill="#d5d9dd" /><rect x="15" y="13.5" width="4" height="9" fill="#1d3d6b" /></Art> },
  { name: "To Do", art: <Art><path d="M0 12l4-4 8 8-4 4z" fill="#1d5aa8" /><path d="M5 18L20 3l4 4L9 22z" fill="#4aa0ee" /></Art> },
  { name: "Red utility", art: <Art><path d="M1 1l5 2 1 3 4 2 5-2 3 1-3 4 5 1-1 4 1 7-5-2-5-1 4-2-2-2-5-1 4-2-3-2 3-2-6-2z" fill="#b3161a" /><path d="M9 10l5-1-1 3 5 1-4 3 5 3" fill="none" stroke="#24211e" strokeWidth="1.1" /></Art> },
  { name: "Messages", running: true, badge: "*", badgeColor: "#c4501f", art: <Art><circle cx="12" cy="12" r="12" fill="#f4f6fa" /><path d="M7 6h9a5 5 0 0 1 0 11h-3l-3 3v-3H9a5 5 0 0 1-4-7z" fill="#2b6fe0" /></Art> },
  { name: "YouTube Music", running: true, art: <Art><circle cx="12" cy="12" r="12" fill="#fb0507" /><circle cx="12" cy="12" r="6" fill="none" stroke="#fff" strokeWidth="1.2" /><path d="M10 8.5l6 3.5-6 3.5z" fill="#fff" /></Art> },
  { name: "Acrobat", running: true, art: <Art><rect x="1" y="1" width="22" height="22" rx="4" fill="#a50c0a" /><path d="M5.5 17.5c3-1 6-6 6.3-10 0-2-1.5-1.5-1.3 0 .5 4 4 7.5 7.5 7.5 1.5 0 1.5-1.5 0-1.5-4 0-8 1-11.5 3-1 .8-1.2 1.3-1 1z" fill="none" stroke="#fff" strokeWidth="1.3" /></Art> },
  { name: "Shop manager", art: <Art><rect width="24" height="24" fill="#2c6ea6" /><path d="M2 8h4l3 8h10l2-7M10 19.5h.1M17 19.5h.1" fill="none" stroke="#e6f0f8" strokeWidth="1.6" strokeLinecap="round" /><circle cx="10" cy="6" r="3" fill="none" stroke="#e6f0f8" /><rect x="14" y="3" width="7" height="5" fill="none" stroke="#e6f0f8" /><path d="M8 11h12M9 13.5h10" stroke="#e6f0f8" strokeWidth=".8" /></Art> },
  { name: "Transfer", running: true, art: <Art><path d="M1 8c6 0 10 3 12 7l3-5h4c0 4-2 7-4 9-1 2-3 4-7 4l-1-2c4-5-1-10-7-11z" fill="#5f8fe0" /><path d="M16 5l6.5 5.5H19V16l-4 2v-7.500h-4z" fill="#2fbf3c" /><path d="M16 5v5.5h-5z" fill="#8be88f" /></Art> },
  { name: "Notes", running: true, art: <Stripes /> },
];

/* ---------- App ---------- */

export default function App() {
  return (
    <Desktop>
      <Global />
      <Browser>
        <TitleBar>
          <Workspaces aria-label="Workspaces">
            <svg width="18" height="18" viewBox="0 0 18 18" fill="none" stroke="currentColor" strokeWidth="1.2" strokeLinejoin="round">
              <path d="M3 13l-1.500-1V5.500L7.500 2l2 .5M6 15l-1.500-1V7L10.500 3.500l2 .5" />
              <path d="M8 8.500l5-3 3.500 1V13l-5 3.500-3.500-1z" />
            </svg>
          </Workspaces>
          <Tab $active>
            <Art size={16} box={16}><path d="M4 1h6l4 5-2 4 2 5H4L2 9z" fill="#2c4590" opacity=".6" /></Art>
            <TabTitle $fade>Export ‹ New Holland Rochester –</TabTitle>
            <TabClose aria-label="Close tab"><X size={13} strokeWidth={1.8} /></TabClose>
          </Tab>
          <Tab>
            <Art size={16} box={16}>
              <path d="M5 4a3 3 0 0 1 6 0" fill="none" stroke="#000" strokeWidth="1.5" />
              <rect y="4" width="16" height="12" fill="#0a0a0a" />
              <path d="M0 6h4v7H0z" fill="#e0353a" /><path d="M4 6h4v7H4z" fill="#2f6fd0" /><path d="M8 6h4v7H8z" fill="#f2b91c" /><path d="M12 6h4v7h-4z" fill="#8ab92d" />
            </Art>
            <TabTitle>Overview - eBay Seller Hub</TabTitle>
            <TabClose aria-label="Close tab"><X size={13} strokeWidth={1.8} /></TabClose>
          </Tab>
          <NewTab aria-label="New tab"><Plus size={17} strokeWidth={1.5} /></NewTab>
          <WindowButton aria-label="Minimize"><Minus size={13} strokeWidth={2} /></WindowButton>
          <WindowButton aria-label="Restore"><Copy size={12} strokeWidth={2} transform="scale(1,-1)" /></WindowButton>
          <WindowButton aria-label="Close"><X size={16} strokeWidth={1.8} /></WindowButton>
        </TitleBar>

        <Toolbar>
          <ToolButton aria-label="Back"><ArrowLeft size={19} strokeWidth={1.4} /></ToolButton>
          <ToolButton aria-label="Reload"><RotateCw size={17} strokeWidth={1.5} /></ToolButton>
          <ToolButton aria-label="Home"><House size={18} strokeWidth={1.5} /></ToolButton>
          <AddressBar>
            <svg width="17" height="17" viewBox="0 0 17 17" fill="none" stroke="currentColor" strokeWidth="1.2">
              <rect x="3" y="6" width="11" height="10" rx="1.5" /><path d="M5.5 6V4a3 3 0 0 1 6 0v2" /><circle cx="8.5" cy="11" r="1" fill="currentColor" />
            </svg>
            <Url>https://<b>www.newhollandrochester.com</b>/wp-admin/admin.php?page=wc_customer_order_csv_export</Url>
            <Star size={18} strokeWidth={1.4} color="#8ba3bd" />
          </AddressBar>
          <ToolButton aria-label="Power Automate"><PowerAutomate size={17} /></ToolButton>
          <ToolButton aria-label="Extension">
            <Art size={17}><circle cx="12" cy="12" r="8.5" fill="none" stroke="#8c98a8" strokeWidth="5.5" /><path d="M9.5 0h3v10h-3z" fill="#4b5e7c" /></Art>
          </ToolButton>
          <ToolButton aria-label="Notes"><Stripes size={17} round /><CountBadge>1</CountBadge></ToolButton>
          <ToolButton aria-label="Extensions">
            <svg width="18" height="18" viewBox="0 0 18 18" fill="none" stroke="currentColor" strokeWidth="1.3" strokeLinejoin="round">
              <path d="M4.5 3.8h3a2 2 0 1 1 4 0h3v3.7a2 2 0 1 0 0 4v3.7h-3a2 2 0 1 1-4 0h-3v-3.7a2 2 0 1 1 0-4z" />
            </svg>
          </ToolButton>
          <ToolDivider />
          <ToolButton aria-label="Favorites">
            <svg width="18" height="18" viewBox="0 0 18 18" fill="none" stroke="currentColor" strokeWidth="1.2" strokeLinejoin="round" strokeLinecap="round">
              <path d="M9.5 5.5L7.5 1.5l-2 4-4.5.8 3.2 3.2-.7 5 4-2.2" /><path d="M9.5 5.5h7.5M11 9h6M10.5 12.5h6.5" />
            </svg>
          </ToolButton>
          <ToolButton $on aria-label="Downloads"><ArrowDownToLine size={19} strokeWidth={1.4} /></ToolButton>
          <ToolButton aria-label="Profile"><Avatar><TractorPhoto /></Avatar></ToolButton>
          <ToolButton aria-label="More"><Ellipsis size={18} strokeWidth={1.8} /></ToolButton>
          <ToolButton aria-label="Copilot"><Copilot /></ToolButton>
        </Toolbar>

        <Page>
          <AdminBar>
            <BarLink href="#" $gap={15} aria-label="WordPress"><FaWordpress size={20} /></BarLink>
            <BarLink href="#" $gap={7}><Dash name="home" />New Holland Rochester</BarLink>
            <Live>Live</Live>
            <BarLink href="#"><Dash name="update" />1</BarLink>
            <BarLink href="#"><Dash name="comment" />3</BarLink>
            <BarLink href="#"><Dash name="plus" size={18} />New</BarLink>
            <BarLink href="#">Smart Slider</BarLink>
            <BarLink href="#">eBay</BarLink>
            <BarLink href="#">WP Rocket</BarLink>
            <BarUser href="#" $gap={19}>
              Straeter
              <svg width="18" height="18" viewBox="0 0 18 18"><rect width="18" height="18" fill="#c8c9ca" /><circle cx="9" cy="7" r="4" fill="#fff" /><path d="M2 18c0-5 3-7 7-7s7 2 7 7z" fill="#fff" /></svg>
            </BarUser>
            <BarLink href="#" $gap={0}>Debug</BarLink>
          </AdminBar>

          <Body>
            <Sidebar>
              <Menu>
                <li>
                  <MenuLink href="#" $current><Dash name="woo" />WooCommerce</MenuLink>
                  <SubMenu>
                    {subItems.map((s) => (
                      <li key={s.label}>
                        <SubLink href="#" $current={s.current}>{s.label}{s.count && <MenuCount>{s.count}</MenuCount>}</SubLink>
                      </li>
                    ))}
                  </SubMenu>
                </li>
                {menuGroups.map((group, i) => (
                  <React.Fragment key={i}>
                    {i > 0 && <Separator aria-hidden="true" />}
                    {group.map((m) => (
                      <li key={m.label}>
                        <MenuLink href="#"><Dash name={m.icon} /><span>{m.label}{m.count && <MenuCount>{m.count}</MenuCount>}</span></MenuLink>
                      </li>
                    ))}
                  </React.Fragment>
                ))}
              </Menu>
            </Sidebar>

            <Main>
              <Row>
                <RowLabel htmlFor="batch">Batch processing</RowLabel>
                <span />
                <div>
                  <CheckLine><Check id="batch" type="checkbox" />Use batch processing for manual exports.</CheckLine>
                  <Description>Only enable this setting when notified that your site does not support background processing.</Description>
                </div>
              </Row>

              <Section>Export Options</Section>

              <Row>
                <RowLabel id="statuses">Order statuses</RowLabel>
                <Help><HelpIcon /></Help>
                <TagField role="group" aria-labelledby="statuses">
                  <Tag><TagRemove aria-label="Remove Processing">×</TagRemove>Processing</Tag>
                  <Tag><TagRemove aria-label="Remove On hold">×</TagRemove>On hold</Tag>
                </TagField>
              </Row>
              <Row>
                <RowLabel htmlFor="refunds">Refunds</RowLabel>
                <Help><HelpIcon /></Help>
                <SelectWrap>
                  <Select id="refunds"><option>Include all orders</option></Select>
                  <ChevronDown size={16} strokeWidth={2.5} />
                </SelectWrap>
              </Row>
              <Row>
                <RowLabel htmlFor="categories">Product categories</RowLabel>
                <Help><HelpIcon /></Help>
                <PickerField id="categories" placeholder="Leave blank to export orders with products in any category." />
              </Row>
              <Row>
                <RowLabel htmlFor="products">Products</RowLabel>
                <Help><HelpIcon /></Help>
                <PickerField id="products" placeholder="Leave blank to export orders with any products." />
              </Row>
              {["Start date", "End date"].map((label) => (
                <Row key={label}>
                  <RowLabel htmlFor={label}>{label}</RowLabel>
                  <span />
                  <div>
                    <DateLine>
                      <TextField id={label} type="text" />
                      <svg width="14" height="15" viewBox="0 0 14 15">
                        <rect x=".5" y=".5" width="13" height="14" fill="#dfe9f2" stroke="#4a7aa8" /><rect x="2" y="2" width="10" height="3" fill="#c9703a" />
                        <path d="M3 7h2M6 7h2M9 7h2M3 9.5h2M9 9.5h2M6 12h2" stroke="#4e8a4a" strokeWidth="1.4" />
                      </svg>
                    </DateLine>
                    <Description>{label} of customers or orders to include in the exported file, in the format <code>YYYY-MM-DD.</code></Description>
                  </div>
                </Row>
              ))}
              <Row>
                <RowLabel htmlFor="notes">Add order notes</RowLabel>
                <span />
                <CheckLine><Check id="notes" type="checkbox" defaultChecked />Enable to add a note to exported orders.</CheckLine>
              </Row>
              <Primary>Export</Primary>
            </Main>
          </Body>

          <Dim />
          <Backdrop>
            <Modal role="dialog" aria-labelledby="modal-title">
              <ModalHeader>
                <ModalTitle id="modal-title">Export Completed</ModalTitle>
                <ModalClose aria-label="Close"><X size={16} strokeWidth={3.5} /></ModalClose>
              </ModalHeader>
              <ModalBody>
                <svg width="12" height="12" viewBox="0 0 12 12"><path d="M1.5 6.5l2.5 3.5L10.5 1.5" fill="none" stroke="#2c3338" strokeWidth="2.2" /></svg>
                <p>Your export is ready! <a href="#">Click here</a> if your download does not start automatically. The exported file will be available under <a href="#">Export List</a> for the next 14 days.</p>
              </ModalBody>
              <ModalFooter><Secondary>Done</Secondary></ModalFooter>
            </Modal>
          </Backdrop>
        </Page>

        <Flyout>
          <FlyoutHeader>
            <FlyoutTitle>Downloads</FlyoutTitle>
            <FlyoutButton aria-label="Open folder"><Folder size={18} strokeWidth={1.5} /></FlyoutButton>
            <FlyoutButton aria-label="Search downloads"><Search size={17} strokeWidth={1.5} /></FlyoutButton>
            <FlyoutButton aria-label="More options"><Ellipsis size={18} strokeWidth={2.2} /></FlyoutButton>
            <FlyoutButton aria-label="Pin"><Pin size={18} strokeWidth={1.5} transform="rotate(45)" /></FlyoutButton>
          </FlyoutHeader>
          <FileList>
            {files.map((f) => (
              <FileRow key={f.name}>
                {f.icon}
                <div>
                  <FileName $gone={f.gone}>{f.name}</FileName>
                  {f.gone ? <Removed>Removed</Removed> : <OpenFile href="#">Open file</OpenFile>}
                </div>
              </FileRow>
            ))}
          </FileList>
          <SeeMore>See more</SeeMore>
        </Flyout>
      </Browser>

      <Taskbar>
        <TaskGroup>
          <TaskButton aria-label="Weather"><Cloud /><TaskBadge>2</TaskBadge></TaskButton>
        </TaskGroup>
        <TaskGroup>
          {tasks.map((t) => (
            <TaskButton key={t.name} aria-label={t.name} $tile={t.tile}>
              {t.art}
              {t.badge && <TaskBadge $color={t.badgeColor}>{t.badge}</TaskBadge>}
              {t.running && <Running $color={typeof t.running === "string" ? t.running : undefined} />}
            </TaskButton>
          ))}
        </TaskGroup>
        <TaskGroup $end>
          <TrayButton $w={32} aria-label="Show hidden icons"><ChevronUp size={16} strokeWidth={2} /></TrayButton>
          <TrayButton $w={32} aria-label="OneDrive"><Cloud gray /></TrayButton>
          <TrayButton $w={32} aria-label="Network">
            <svg width="16" height="18" viewBox="0 0 16 18" fill="none" stroke="#fff" strokeWidth="1.2"><path d="M10 2H1v11h13v-3M4 16.5h7M7.5 13v3.5M11.5 1h3.500v4h-3.500zM13.2 5v5" /></svg>
          </TrayButton>
          <TrayButton $w={22} aria-label="Volume"><Volume1 size={18} strokeWidth={1.5} /></TrayButton>
          <Clock>7:56 AM<br />5/3/2025</Clock>
          <TrayButton $w={26} aria-label="Notifications">
            <svg width="16" height="18" viewBox="0 0 16 18"><path d="M7 2c-3 0-4.5 2-4.5 5v4L1 14h12.5L12 11V7c0-3-2-5-5-5z" fill="#fff" /><path d="M5 15.5h4c0 2-4 2-4 0z" fill="#fff" /><path d="M5 6h4l-4 5h4" fill="none" stroke="#24211e" strokeWidth="1.3" /><path d="M12 1h3l-3 4h3" fill="none" stroke="#fff" /></svg>
          </TrayButton>
        </TaskGroup>
      </Taskbar>
    </Desktop>
  );
}
